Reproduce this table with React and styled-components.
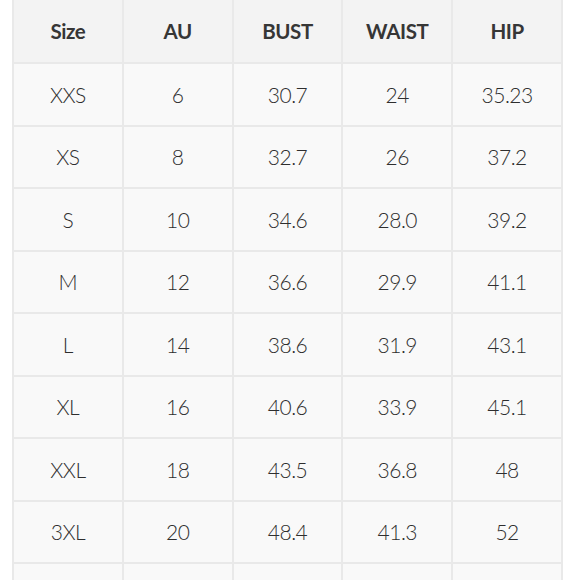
import React from "react";
import styled, { createGlobalStyle } from "styled-components";

const Global = createGlobalStyle`
  html, body { margin: 0; padding: 0; background: #ffffff; }
  body { font-family: Lato, "Open Sans", sans-serif; overflow: hidden; }
`;

const Page = styled.div`
  width: 580px;
  height: 580px;
  overflow: hidden;
  padding-left: 12px;
  box-sizing: border-box;
`;

const Table = styled.div`
  width: 551px;
  display: grid;
  grid-template-columns: repeat(5, 1fr);
  grid-template-rows: 62px;
  grid-auto-rows: 60.5px;
  gap: 2px;
  padding: 0 2px 2px 2px;
  background: #e9e9e9;
  box-sizing: border-box;
`;

const Cell = styled.div`
  display: flex;
  align-items: center;
  justify-content: center;
  background: ${(p) => (p.$head ? "#f3f3f3" : "#f9f9f9")};
  color: ${(p) => (p.$head ? "#363636" : "#2e2e2e")};
  font-family: Lato, "Open Sans", sans-serif;
  font-size: ${(p) => (p.$head ? "20.5px" : "21px")};
  font-weight: ${(p) => (p.$head ? 700 : 300)};
  letter-spacing: ${(p) => (p.$head ? "-0.4px" : "-0.5px")};
`;

const head = ["Size", "AU", "BUST", "WAIST", "HIP"];
const rows = [
  ["XXS", "6", "30.7", "24", "35.23"],
  ["XS", "8", "32.7", "26", "37.2"],
  ["S", "10", "34.6", "28.0", "39.2"],
  ["M", "12", "36.6", "29.9", "41.1"],
  ["L", "14", "38.6", "31.9", "43.1"],
  ["XL", "16", "40.6", "33.9", "45.1"],
  ["XXL", "18", "43.5", "36.8", "48"],
  ["3XL", "20", "48.4", "41.3", "52"],
  ["", "", "", "", ""],
];

export default function App() {
  return (
    <Page>
      <Global />
      <Table>
        {head.map((h) => (
          <Cell $head key={h}>{h}</Cell>
        ))}
        {rows.map((r, i) =>
          r.map((c, j) => <Cell key={i + "-" + j}>{c}</Cell>)
        )}
      </Table>
    </Page>
  );
}
